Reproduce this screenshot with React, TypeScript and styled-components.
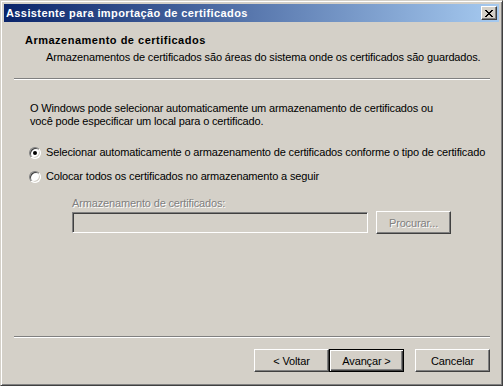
import styled, { createGlobalStyle } from 'styled-components';

const GlobalStyle = createGlobalStyle`
  html, body {
    margin: 0;
    padding: 0;
    background: #d4d0c8;
  }
  body {
    font-family: Tahoma, "Liberation Sans", Arial, sans-serif;
    font-size: 11px;
    letter-spacing: -0.15px;
    color: #000;
  }
`;

const Window = styled.div`
  box-sizing: border-box;
  width: 503px;
  height: 386px;
  display: flex;
  flex-direction: column;
  background: #d4d0c8;
  border: 1px solid;
  border-color: #d4d0c8 #404040 #404040 #d4d0c8;
  box-shadow: inset 1px 1px #fff, inset -1px -1px #808080;
  padding: 3px;
`;

const TitleBar = styled.div`
  height: 18px;
  flex: none;
  display: flex;
  align-items: center;
  justify-content: space-between;
  padding: 0 2px 0 2px;
  background: linear-gradient(to right, #0a246a, #a6caf0);
`;

const Title = styled.span`
  color: #fff;
  font-weight: bold;
  font-size: 11px;
  letter-spacing: 0.4px;
  line-height: 13px;
  white-space: nowrap;
`;

const CloseButton = styled.div`
  box-sizing: border-box;
  width: 16px;
  height: 14px;
  display: flex;
  align-items: center;
  justify-content: center;
  background: #d4d0c8;
  border: 1px solid;
  border-color: #fff #404040 #404040 #fff;
  box-shadow: inset -1px -1px #808080;
`;

const Header = styled.div`
  height: 56px;
  flex: none;
  padding: 12px 0 0 21px;
  box-sizing: border-box;
`;

const HeaderTitle = styled.div`
  font-weight: bold;
  letter-spacing: 0.5px;
  line-height: 13px;
`;

const HeaderSub = styled.div`
  margin: 4px 0 0 21px;
  line-height: 13px;
`;

const Separator = styled.div`
  flex: none;
  margin: 0 9px 0 10px;
  border-top: 1px solid #808080;
  border-bottom: 1px solid #fff;
`;

const Body = styled.div`
  flex: 1;
  padding: 22px 0 0 25px;
  display: flex;
  flex-direction: column;
`;

const Paragraph = styled.p`
  margin: 0 0 0 1px;
  line-height: 13px;
`;

const RadioRow = styled.label<{ $gap: number }>`
  display: flex;
  align-items: center;
  gap: 5px;
  height: 13px;
  margin-top: ${(p) => p.$gap}px;
  line-height: 13px;
  white-space: nowrap;
`;

const RadioDot = styled.span<{ $checked?: boolean }>`
  box-sizing: border-box;
  position: relative;
  flex: none;
  width: 12px;
  height: 12px;
  border-radius: 50%;
  background: #fff;
  border: 1px solid;
  border-color: #808080 #fff #fff #808080;
  box-shadow: inset 1px 1px #404040, inset -1px -1px #d4d0c8;
  &::after {
    content: '';
    display: ${(p) => (p.$checked ? 'block' : 'none')};
    position: absolute;
    left: 3px;
    top: 3px;
    width: 4px;
    height: 4px;
    border-radius: 50%;
    background: #000;
  }
`;

const StoreGroup = styled.div`
  margin: 14px 0 0 43px;
`;

const DisabledLabel = styled.div`
  line-height: 13px;
  color: #808080;
  text-shadow: 1px 1px 0 #fff;
`;

const FieldRow = styled.div`
  display: flex;
  align-items: center;
  gap: 8px;
  margin-top: 1px;
`;

const TextBox = styled.div`
  box-sizing: border-box;
  width: 296px;
  height: 21px;
  background: #d4d0c8;
  border: 1px solid;
  border-color: #808080 #fff #fff #808080;
  box-shadow: inset 1px 1px #404040, inset -1px -1px #d4d0c8;
`;

const Button = styled.button<{ $default?: boolean }>`
  box-sizing: border-box;
  width: 75px;
  height: 23px;
  padding: 0;
  font: inherit;
  font-size: 11px;
  letter-spacing: inherit;
  color: ${(p) => (p.disabled ? '#808080' : '#000')};
  text-shadow: ${(p) => (p.disabled ? '1px 1px 0 #fff' : 'none')};
  background: #d4d0c8;
  border: 1px solid;
  border-color: ${(p) => (p.$default ? '#000' : '#fff #404040 #404040 #fff')};
  box-shadow: ${(p) =>
    p.$default
      ? 'inset 1px 1px #fff, inset -1px -1px #404040, inset -2px -2px #808080'
      : 'inset -1px -1px #808080'};
  cursor: default;
`;

const Footer = styled.div`
  flex: none;
  display: flex;
  justify-content: flex-end;
  padding: 11px 9px 10px 0;
`;

const Gap = styled.span`
  width: 11px;
`;

export default function App() {
  return (
    <>
      <GlobalStyle />
      <Window>
        <TitleBar>
          <Title>Assistente para importação de certificados</Title>
          <CloseButton>
            <svg width="8" height="7" viewBox="0 0 8 7" shapeRendering="crispEdges">
              <path
                d="M0 0h2v1h-2zM6 0h2v1h-2zM1 1h2v1h-2zM5 1h2v1h-2zM2 2h4v1h-4zM3 3h2v1h-2zM2 4h4v1h-4zM1 5h2v1h-2zM5 5h2v1h-2zM0 6h2v1h-2zM6 6h2v1h-2z"
                fill="#000"
              />
            </svg>
          </CloseButton>
        </TitleBar>
        <Header>
          <HeaderTitle>Armazenamento de certificados</HeaderTitle>
          <HeaderSub>
            Armazenamentos de certificados são áreas do sistema onde os certificados são guardados.
          </HeaderSub>
        </Header>
        <Separator />
        <Body>
          <Paragraph>
            O Windows pode selecionar automaticamente um armazenamento de certificados ou
            <br />
            você pode especificar um local para o certificado.
          </Paragraph>
          <RadioRow $gap={18}>
            <RadioDot $checked />
            Selecionar automaticamente o armazenamento de certificados conforme o tipo de certificado
          </RadioRow>
          <RadioRow $gap={11}>
            <RadioDot />
            Colocar todos os certificados no armazenamento a seguir
          </RadioRow>
          <StoreGroup>
            <DisabledLabel>Armazenamento de certificados:</DisabledLabel>
            <FieldRow>
              <TextBox />
              <Button disabled>Procurar...</Button>
            </FieldRow>
          </StoreGroup>
        </Body>
        <Separator />
        <Footer>
          <Button>&lt; Voltar</Button>
          <Button $default>Avançar &gt;</Button>
          <Gap />
          <Button>Cancelar</Button>
        </Footer>
      </Window>
    </>
  );
}
